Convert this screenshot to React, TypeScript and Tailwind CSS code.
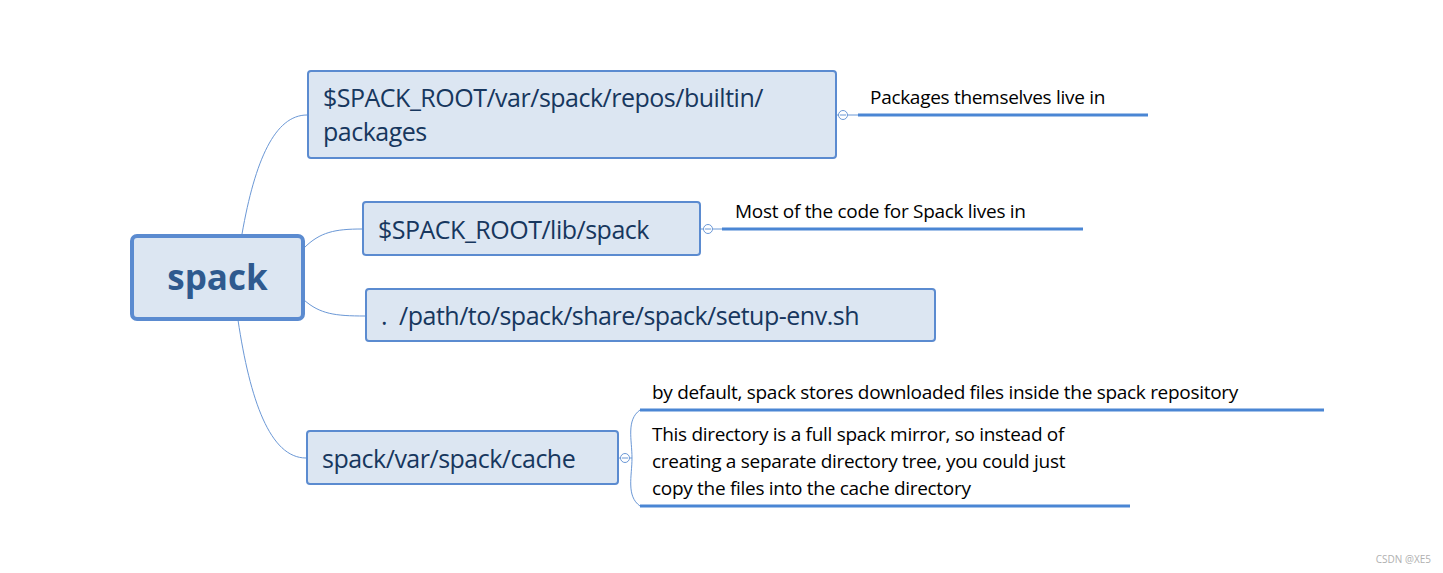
import React from 'react';

const font = { fontFamily: '"Open Sans", "Liberation Sans", sans-serif' };

const Node = ({ className, children }: { className: string; children: React.ReactNode }) => (
  <div
    className={`absolute flex items-center border-2 border-[#5b8bd0] bg-[#dce6f2] rounded-[4px] text-[#17375e] text-[25px] leading-[34px] tracking-[-0.5px] ${className}`}
  >
    {children}
  </div>
);

export default function App() {
  return (
    <div className="relative w-[1443px] h-[573px] bg-white overflow-hidden" style={font}>
      {/* connectors */}
      <svg className="absolute inset-0" width="1443" height="573">
        <g fill="none" stroke="#6b98d6" strokeWidth="1">
          <path d="M242 234 C 255 160, 275 115, 307 115" />
          <path d="M304 248 C 320 232, 335 229, 362 229" />
          <path d="M304 300 C 320 314, 335 316, 365 316" />
          <path d="M238 320 C 250 400, 270 458, 306 458" />
          <path d="M640 410 C 626 420, 632 440, 632 458 C 632 476, 626 496, 640 506" />
          <path d="M836 115 H 858" />
          <path d="M700 229 H 722" />
          <path d="M618 458 H 632" />
        </g>
        <g fill="white" stroke="#6b98d6" strokeWidth="1">
          <circle cx="843" cy="115" r="4.5" />
          <circle cx="708" cy="229" r="4.5" />
          <circle cx="625" cy="458" r="4.5" />
        </g>
        <g stroke="#6b98d6" strokeWidth="1">
          <path d="M840 115 H 846" />
          <path d="M705 229 H 711" />
          <path d="M622 458 H 628" />
        </g>
        <g stroke="#4a86d4" strokeWidth="3">
          <path d="M858 115 H 1148" />
          <path d="M722 229 H 1083" />
          <path d="M640 410 H 1324" />
          <path d="M640 506 H 1130" />
        </g>
      </svg>

      {/* root */}
      <div className="absolute left-[130px] top-[234px] w-[175px] h-[87px] flex items-center justify-center border-4 border-[#5b8bd0] bg-[#dce6f2] rounded-[7px] text-[#2f5a8f] text-[35px] font-bold">
        spack
      </div>

      <Node className="left-[307px] top-[70px] w-[530px] h-[89px] px-[14px] pb-[2px]">
        $SPACK_ROOT/var/spack/repos/builtin/
        <br />
        packages
      </Node>
      <Node className="left-[362px] top-[201px] w-[339px] h-[55px] px-[14px]">$SPACK_ROOT/lib/spack</Node>
      <Node className="left-[365px] top-[288px] w-[571px] h-[54px] px-[14px]">.&nbsp;&nbsp;/path/to/spack/share/spack/setup-env.sh</Node>
      <Node className="left-[306px] top-[430px] w-[313px] h-[55px] px-[14px]">spack/var/spack/cache</Node>

      {/* labels */}
      <div className="absolute left-[870px] top-[84px] text-[19px] text-black leading-[26px] tracking-[-0.3px]">Packages themselves live in</div>
      <div className="absolute left-[735px] top-[198px] text-[19px] text-black leading-[26px] tracking-[-0.3px]">Most of the code for Spack lives in</div>
      <div className="absolute left-[652px] top-[379px] text-[19px] text-black leading-[26px] tracking-[-0.3px]">
        by default, spack stores downloaded files inside the spack repository
      </div>
      <div className="absolute left-[652px] top-[421px] text-[19px] text-black leading-[27px] tracking-[-0.3px]">
        This directory is a full spack mirror, so instead of
        <br />
        creating a separate directory tree, you could just
        <br />
        copy the files into the cache directory
      </div>

      <div className="absolute right-[12px] bottom-[6px] text-[10px] text-[#b0b0b0]">CSDN @XE5</div>
    </div>
  );
}
